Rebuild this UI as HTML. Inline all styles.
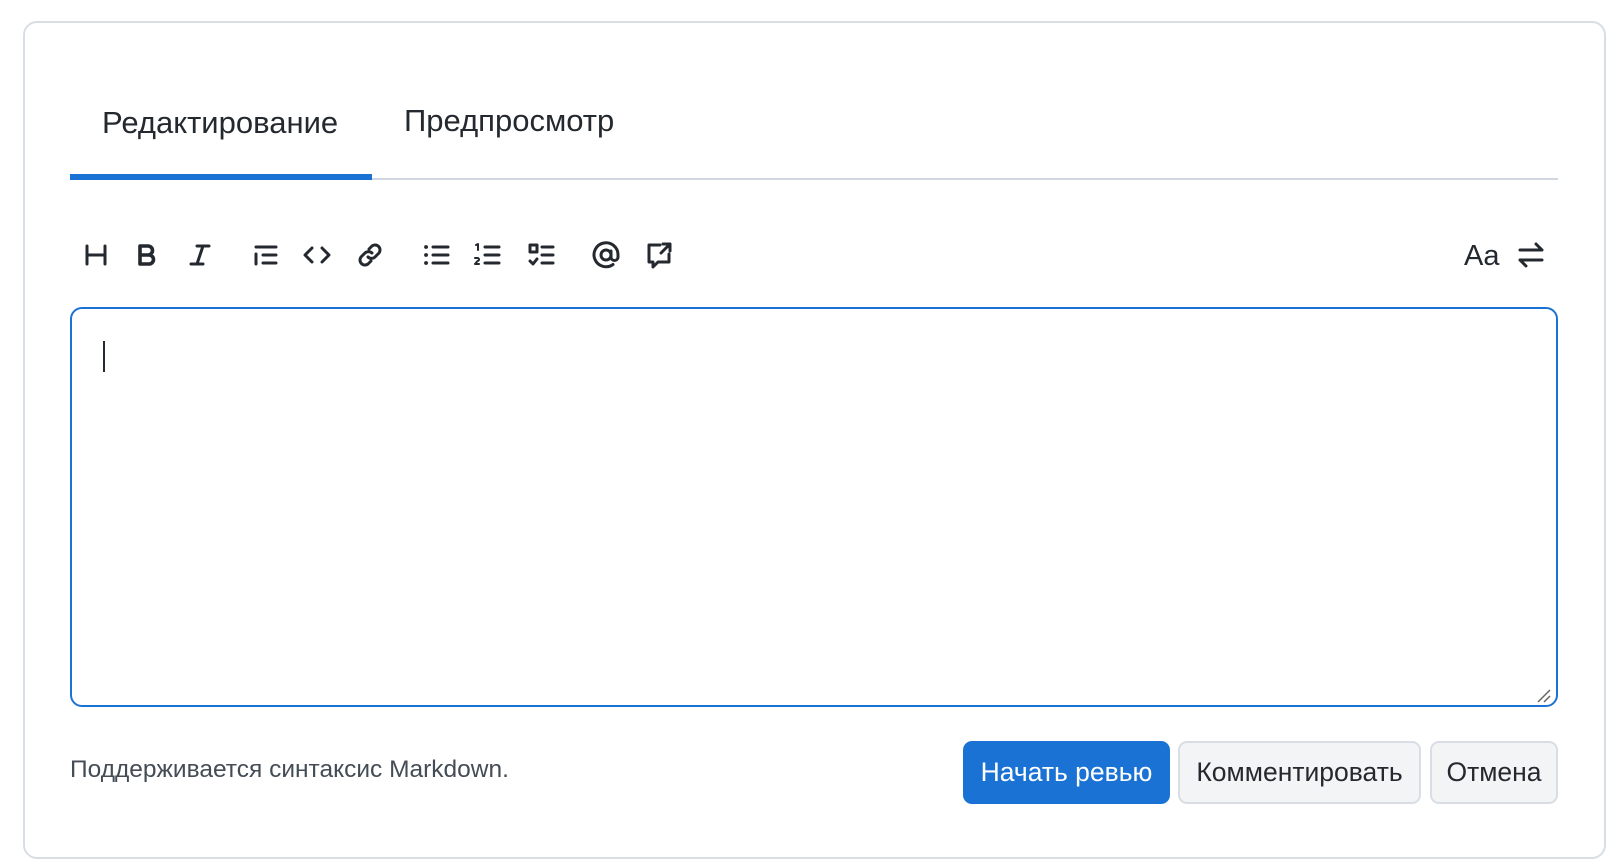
<!DOCTYPE html>
<html><head><meta charset="utf-8"><style>
*{box-sizing:border-box;margin:0;padding:0}
body{width:1614px;height:868px;background:#fff;font-family:"Liberation Sans",Arial,sans-serif;color:#24292f;position:relative;overflow:hidden}
.card{position:absolute;left:23px;top:21px;width:1583px;height:838px;border:2px solid #d8dee4;border-radius:14px}
.tab{position:absolute;font-size:31px;top:105px;color:#24292f}
.sep{position:absolute;left:70px;top:178px;width:1488px;height:2px;background:#d0d7de}
.act{position:absolute;left:70px;top:174px;width:302px;height:6px;background:#1a73d4}
.ic{position:absolute;top:239px;width:32px;height:32px}
.ic svg{width:32px;height:32px;fill:none;stroke:#24292f;stroke-width:3;stroke-linecap:round;stroke-linejoin:round}
.ta{position:absolute;left:70px;top:307px;width:1488px;height:400px;border:2px solid #1a73d4;border-radius:12px}
.caret{position:absolute;left:103px;top:341px;width:2px;height:31px;background:#24292f}
.foot{position:absolute;left:70px;top:756px;font-size:24.5px;color:#444c56}
.btn{position:absolute;top:741px;height:63px;border-radius:9px;font-size:26.5px;display:flex;align-items:center;justify-content:center}
.g{background:#f3f4f6;border:2px solid #d8dee4;color:#24292f}
</style></head><body>
<div class="card"></div>
<div class="tab" style="left:102px">Редактирование</div>
<div class="tab" style="left:404px;top:103px">Предпросмотр</div>
<div class="sep"></div><div class="act"></div>

<div class="ic" style="left:80px"><svg viewBox="0 0 32 32"><path d="M7 7v18M25 7v18M7 16h18"/></svg></div>
<div class="ic" style="left:131px"><svg viewBox="0 0 32 32" style="stroke-width:3.6"><path d="M9 7h8a4.5 4.5 0 0 1 0 9H9zM9 16h9a4.5 4.5 0 0 1 0 9H9z"/></svg></div>
<div class="ic" style="left:184px"><svg viewBox="0 0 32 32"><path d="M13 7h12M7 25h12M19 7l-6 18"/></svg></div>
<div class="ic" style="left:249px"><svg viewBox="0 0 32 32"><path d="M7 8h20M14 16h13M14 24h13M7 15v10"/></svg></div>
<div class="ic" style="left:301px"><svg viewBox="0 0 32 32"><path d="M11 9l-7 7 7 7M21 9l7 7-7 7"/></svg></div>
<div class="ic" style="left:354px"><svg viewBox="0 0 32 32"><path d="M15 10l3-3a5 5 0 0 1 7 7l-4 4a5 5 0 0 1-7 0M17 22l-3 3a5 5 0 0 1-7-7l4-4a5 5 0 0 1 7 0"/></svg></div>
<div class="ic" style="left:420px"><svg viewBox="0 0 32 32"><path d="M13 8h15M13 16h15M13 24h15"/><path d="M6 8h.1M6 16h.1M6 24h.1" style="stroke-width:3.8"/></svg></div>
<div class="ic" style="left:471px"><svg viewBox="0 0 32 32"><path d="M14 8h14M14 16h14M14 24h14"/><path d="M5 6l2-1v6M4 19h2.5a1.5 1.5 0 0 1 0 3L4 25h4" style="stroke-width:2"/></svg></div>
<div class="ic" style="left:525px"><svg viewBox="0 0 32 32"><path d="M5 6h7v7H5zM17 8h11M17 16h11M17 24h11M5 22l3 3 4-5"/></svg></div>
<div class="ic" style="left:590px"><svg viewBox="0 0 32 32"><circle cx="16" cy="16" r="5"/><path d="M21 12v6a3.5 3.5 0 0 0 7 0v-2a12 12 0 1 0-5 9.5"/></svg></div>
<div class="ic" style="left:643px"><svg viewBox="0 0 32 32"><path d="M17 6H6v17h4v5l5-5h11v-8M20 5h7v7M27 5l-9 9"/></svg></div>

<div style="position:absolute;left:1464px;top:240px;font-size:29px;color:#24292f">Aa</div>
<div class="ic" style="left:1515px"><svg viewBox="0 0 32 32"><path d="M5 11h22M21 5l6 6M27 21H5M11 27l-6-6"/></svg></div>

<div class="ta"></div><div class="caret"></div>
<svg style="position:absolute;left:1536px;top:688px" width="16" height="16"><path d="M2 14L14 2M8 14L14 8" stroke="#666" stroke-width="1.5"/></svg>

<div class="foot">Поддерживается синтаксис Markdown.</div>
<div class="btn" style="left:963px;width:207px;background:#1a73d4;color:#fff">Начать ревью</div>
<div class="btn g" style="left:1178px;width:243px">Комментировать</div>
<div class="btn g" style="left:1430px;width:128px">Отмена</div>
</body></html>
